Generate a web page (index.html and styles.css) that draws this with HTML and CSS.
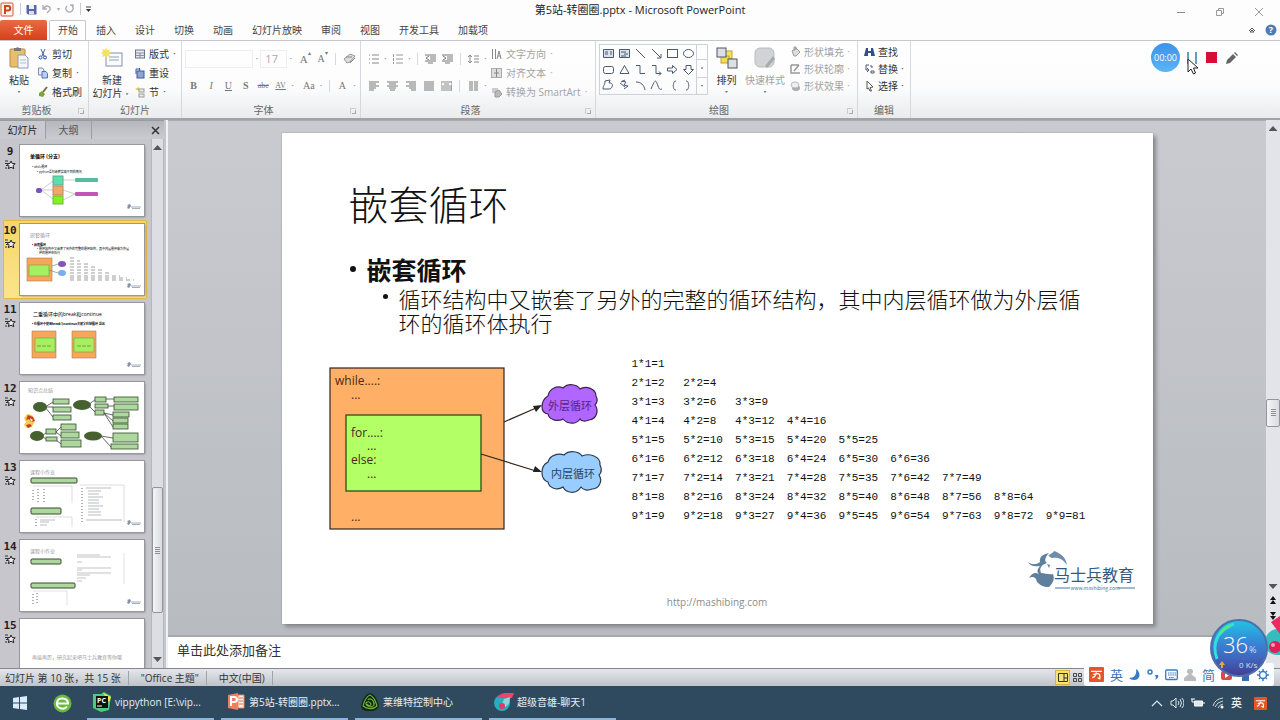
FILE: index.html
```html
<!DOCTYPE html>
<html lang="zh-CN">
<head>
<meta charset="utf-8">
<title>第5站-转圈圈.pptx - Microsoft PowerPoint</title>
<link rel="stylesheet" href="styles.css">
</head>
<body>
<svg class="defs" aria-hidden="true">
  <symbol id="star" viewBox="0 0 12 10"><path d="M1 1h3M1 3.500h2M2 5.500h2M1 8h2" stroke="#333" fill="none"/><path d="M7 1l1.200 2.500 3 .2-2.200 2 .8 3L7 7.200 4.300 8.700l.8-3-2.200-2 3-.2z" fill="#eee" stroke="#222"/></symbol>
  <symbol id="minilogo" viewBox="0 0 16 6"><path d="M1 1l3-1 1 2-2 3-2-1 1-2z" fill="#8593a5"/><path d="M5 3h10M6 4.500h8" stroke="#909aa5" stroke-width=".8"/></symbol>
  <symbol id="wan" viewBox="0 0 14 14"><rect width="14" height="14" rx="1" fill="#e4552a"/><path d="M2 4h10M3 10c3 0 3-3 4-5M4 7c4-1 7-2 6 4l-2-1" fill="none" stroke="#fff" stroke-width="1.200"/></symbol>
</svg>
<div class="app">
  <header class="titlebar">
    <div class="quick">
      <svg width="15" height="15" viewBox="0 0 15 15"><rect x="1" y="1" width="12" height="13" rx="1" fill="#fff3ec" stroke="#d35230"/><path d="M5 12V4h3a2.200 2.200 0 010 4.500H5" fill="none" stroke="#cf4320" stroke-width="2"/></svg>
      <i class="bar"></i>
      <button aria-label="保存"><svg width="11" height="11" viewBox="0 0 11 11"><path d="M.5 1h10v9.500H2L.5 9z" fill="#5866a8"/><rect x="3" y="1" width="5" height="4" fill="#eef"/><rect x="3" y="7" width="5" height="3.500" fill="#dde"/></svg></button>
      <button aria-label="撤消"><svg width="10" height="10" viewBox="0 0 10 10"><path d="M1 1v4h4M2 4c3-4 7-1 6 2L5 9" fill="none" stroke="#a9acb2" stroke-width="1.300"/></svg></button>
      <span class="dot">▾</span>
      <button aria-label="重复"><svg width="10" height="10" viewBox="0 0 10 10"><path d="M2 2a3.500 3.500 0 105 0M8 4V1H5" fill="none" stroke="#a9acb2" stroke-width="1.300"/></svg></button>
      <i class="bar"></i>
      <button aria-label="自定义"><svg width="6" height="7" viewBox="0 0 6 7"><path d="M0 1h5" stroke="#444"/><path d="M0 3h5L2.500 6z" fill="#333"/></svg></button>
    </div>
    <h1>第5站-转圈圈.pptx - Microsoft PowerPoint</h1>
    <div class="wincontrols">
      <button aria-label="最小化"><svg width="10" height="10" viewBox="0 0 10 10"><path d="M1 5.500h8" stroke="#888"/></svg></button>
      <button aria-label="还原"><svg width="10" height="10" viewBox="0 0 10 10"><path d="M1.500 3.500h5v5h-5zM3.500 3V1.500h5v5H7" fill="none" stroke="#999"/></svg></button>
      <button aria-label="关闭"><svg width="10" height="10" viewBox="0 0 10 10"><path d="M1 1l8 8M9 1L1 9" stroke="#999"/></svg></button>
    </div>
  </header>

  <nav class="tabs">
    <button class="file">文件</button><button class="active">开始</button><button>插入</button><button>设计</button><button>切换</button><button>动画</button><button>幻灯片放映</button><button>审阅</button><button>视图</button><button>开发工具</button><button>加载项</button>
    <span class="help"><svg width="8" height="8" viewBox="0 0 8 8"><path d="M1 5l3-3 3 3M2 6h4L4 4z" fill="none" stroke="#555"/></svg>
    <svg width="12" height="12" viewBox="0 0 12 12"><circle cx="6" cy="6" r="5.500" fill="#4f7ab5"/><text x="6" y="9" text-anchor="middle" fill="#fff" class="q">?</text></svg></span>
  </nav>

  <section class="ribbon">
    <div class="group g-clip">
      <div class="tools">
        <button class="big"><svg width="22" height="24" viewBox="0 0 22 24"><rect x="2" y="3" width="15" height="18" rx="1" fill="#e8bd6c" stroke="#b98a3c"/><path d="M6 5V2h2a2 2 0 013 0h2v3z" fill="#777"/><path d="M10 9h7l3 3v10H10z" fill="#f3f6fc" stroke="#8e9bb5"/><path d="M12 14h6M12 17h6" stroke="#b3bed0"/></svg><span>粘贴</span><i class="caret"></i></button>
        <div class="stack">
          <button><svg width="10" height="12" viewBox="0 0 10 12"><path d="M3 1l3 7M7 1L4 8" stroke="#46619b"/><circle cx="2.500" cy="9.500" r="1.500" fill="none" stroke="#234a91"/><circle cx="7" cy="9.500" r="1.500" fill="none" stroke="#234a91"/></svg>剪切</button>
          <button><svg width="10" height="12" viewBox="0 0 10 12"><path d="M.5 1h4l1.500 2v5H.500z" fill="#e8eefa" stroke="#778bb4"/><path d="M4 4.500h4l1.500 2V11H4z" fill="#b9cdf2" stroke="#5774b2"/></svg>复制<i class="caret"></i></button>
          <button><svg width="10" height="12" viewBox="0 0 10 12"><path d="M9 1L5 6" stroke="#786b3c" stroke-width="2"/><path d="M1 7l3-2 3 3-2 3-4-1z" fill="#7ba638"/></svg>格式刷</button>
        </div>
      </div>
      <h2>剪贴板</h2><i class="launch"></i>
    </div>
    <div class="group g-slide">
      <div class="tools">
        <button class="big"><svg width="22" height="24" viewBox="0 0 22 24"><rect x="5" y="7" width="16" height="13" fill="#f8fbff" stroke="#8590a8"/><path d="M8 11h10M8 14h10" stroke="#c6cede" stroke-width="2"/><path d="M5 1l1 3 3-1-1 3 3 1-3 1 1 3-3-1-1 3-1-3-3 1 1-3-3-1 3-1-1-3 3 1z" fill="#f4e35d"/></svg><span>新建<br>幻灯片<i class="caret"></i></span></button>
        <div class="stack">
          <button><svg width="10" height="12" viewBox="0 0 10 12"><rect x=".5" y="2" width="9" height="8" fill="#e6e9f0" stroke="#6d7486"/><path d="M1 5h8M5 5v5M1 7.500h8" stroke="#8a90a0"/></svg>版式<i class="caret"></i></button>
          <button><svg width="10" height="12" viewBox="0 0 10 12"><rect x="2" y="4" width="7" height="7" fill="#8fa4d0" stroke="#455b91"/><path d="M1 7V2h4l-1-1M5 2L4 4" fill="none" stroke="#31589b"/></svg>重设</button>
          <button><svg width="10" height="12" viewBox="0 0 10 12"><path d="M0 3l4-2v4z" fill="#eecb42"/><rect x="4" y="3" width="5" height="3" fill="#eee" stroke="#999"/><rect x="4" y="8" width="5" height="3" fill="#eee" stroke="#999"/></svg>节<i class="caret"></i></button>
        </div>
      </div>
      <h2>幻灯片</h2>
    </div>
    <div class="group g-font">
      <div class="rows">
        <div class="row">
          <select class="face" aria-label="字体"><option></option></select><i class="caret"></i>
          <input class="size" aria-label="字号" value="17"><i class="caret"></i>
          <button class="serif grow">A<sup>▴</sup></button><button class="serif shrink">A<sup>▾</sup></button><i class="sep"></i>
          <button aria-label="清除格式"><svg width="13" height="12" viewBox="0 0 13 12"><path d="M1 6L7 1l5 2-5 6-3 1z" fill="#ddd" stroke="#999"/><path d="M3 4h6M7 10l5-5" stroke="#888"/></svg></button>
        </div>
        <div class="row serif">
          <button><b>B</b></button><button><i>I</i></button><button><u>U</u></button><button><b>S</b></button><button class="tiny"><s>abe</s></button><button class="tiny"><u>AV</u></button><i class="caret"></i><button class="aa">Aa</button><i class="caret"></i><i class="sep"></i><button>A</button><i class="caret"></i>
        </div>
      </div>
      <h2>字体</h2><i class="launch"></i>
    </div>
    <div class="group g-para">
      <div class="tools">
        <div class="rows">
          <div class="row">
            <button aria-label="项目符号"><svg width="11" height="10" viewBox="0 0 11 10"><path d="M1 1h1M1 5h1M1 9h1M4 1h7M4 5h7M4 9h7" stroke="#888"/></svg></button><i class="caret"></i>
            <button aria-label="编号"><svg width="11" height="10" viewBox="0 0 11 10"><path d="M1.500 0v3M1.500 4v3M1.500 8v2M4 1h7M4 5h7M4 9h7" stroke="#999"/></svg></button><i class="caret"></i><i class="sep"></i>
            <button aria-label="减少缩进"><svg width="11" height="10" viewBox="0 0 11 10"><path d="M0 1h11M5 3h6M5 5h6M0 7h11M3 9h5M4 2L1 4l3 2" stroke="#777" fill="none"/></svg></button>
            <button aria-label="增加缩进"><svg width="11" height="10" viewBox="0 0 11 10"><path d="M0 1h11M5 3h6M5 5h6M0 7h11M3 9h5M1 2l3 2-3 2" stroke="#777" fill="none"/></svg></button><i class="sep"></i>
            <button aria-label="行距"><svg width="11" height="10" viewBox="0 0 11 10"><path d="M2 1v8M0 3l2-2 2 2M0 7l2 2 2-2M6 2h5M6 5h5M6 8h5" stroke="#888" fill="none"/></svg></button><i class="caret"></i>
          </div>
          <div class="row">
            <button aria-label="左对齐"><svg width="11" height="10" viewBox="0 0 11 10"><path d="M0 1h10M0 3h7M0 5h10M0 7h7M0 9h5" stroke="#777"/></svg></button>
            <button aria-label="居中"><svg width="11" height="10" viewBox="0 0 11 10"><path d="M0 1h11M2 3h7M0 5h11M2 7h7M3 9h5" stroke="#777"/></svg></button>
            <button aria-label="右对齐"><svg width="11" height="10" viewBox="0 0 11 10"><path d="M1 1h10M4 3h7M1 5h10M4 7h7M6 9h5" stroke="#777"/></svg></button>
            <button aria-label="两端对齐"><svg width="11" height="10" viewBox="0 0 11 10"><path d="M1 1h10M1 3h10M1 5h10M1 7h10M1 9h10" stroke="#777"/></svg></button>
            <button aria-label="分散对齐"><svg width="11" height="10" viewBox="0 0 11 10"><path d="M0 0v10M11 0v10M1 1h10M1 5h10M1 7h10M1 9h10M3 3h5" stroke="#888"/></svg></button><i class="sep"></i>
            <button aria-label="分栏"><svg width="11" height="10" viewBox="0 0 11 10"><path d="M1 1h4M1 3h4M1 5h4M1 7h4M1 9h4M6 1h4M6 3h4M6 5h4M6 7h4M6 9h4" stroke="#777"/></svg></button><i class="caret"></i>
          </div>
        </div>
        <div class="stack dim">
          <button><svg width="11" height="12" viewBox="0 0 11 12"><path d="M1.500 1v10M4.500 1v10M6 11l2-8 2 8M7 8h3" stroke="#888" fill="none"/></svg>文字方向<i class="caret"></i></button>
          <button><svg width="11" height="12" viewBox="0 0 11 12"><rect x=".5" y="1.500" width="10" height="9" fill="#ddd" stroke="#aaa"/><path d="M5.500 2v8M3 6h5" stroke="#888"/></svg>对齐文本<i class="caret"></i></button>
          <button><svg width="11" height="12" viewBox="0 0 11 12"><path d="M1 2h6v5H1z" fill="#ccc"/><path d="M4 6l4-2 3 4-3 3H4z" fill="#bbb" stroke="#999"/></svg>转换为 SmartArt<i class="caret"></i></button>
        </div>
      </div>
      <h2>段落</h2><i class="launch"></i>
    </div>
    <div class="group g-draw">
      <div class="tools">
        <div class="gallery">
          <svg viewBox="0 0 96 48" width="96" height="48" fill="none" stroke="#4b5872" role="img" aria-label="形状">
            <path d="M3.500 4.500h10v8h-10zM19.500 4.500h10v8h-10z" fill="#dde1ea"/><path d="M5 7h3M5 9h3M10 7h2M10 9h2M21 7h5M24 9h4M21 11h5"/>
            <path d="M36 4l9 9M52 4l9 9M61 9v4h-4"/><rect x="67.500" y="4.500" width="10" height="8"/><ellipse cx="88.500" cy="8.500" rx="5" ry="4"/>
            <rect x="3.500" y="21.500" width="10" height="7" rx="2"/><path d="M24.500 20.500l4.500 8h-9zM36 20.500h4v8h5M52 20.500h4v8h5l-2-2m2 2l-2 2M67.500 23h5v-2.500l4.500 4-4.500 4V26h-5zM86 20.500h5v4h2.500l-5 5-5-5H86z"/>
            <path d="M5 36l5-1-1 3c5-1 4 6 0 6H3c0-4 2-3 2-8zM22 36l4 1-2 3 4 1-4 3m-4-6l5 4m-4-5l4-2M36 37c5 0 8 3 9 8M51 44c5-12 5-8 7-3s2 3 4 3M76 36c-3 0-2 3-3 5 1 1 0 4 3 4M86 36c3 0 2 3 3 5-1 1 0 4-3 4"/>
          </svg>
          <div class="gscroll"><button aria-label="向上"></button><button aria-label="向下"><i class="caret"></i></button><button aria-label="更多"><i class="caret"></i></button></div>
        </div>
        <button class="big arrange"><svg width="22" height="24" viewBox="0 0 22 24"><rect x="8" y="5" width="8" height="8" fill="#f4e466" stroke="#b8a12e"/><rect x="5" y="10" width="8" height="7" fill="#f2dc50" stroke="#b8a12e"/><rect x="1" y="2" width="9" height="9" fill="#dcdfe6" stroke="#4f5561"/><rect x="12" y="13" width="9" height="9" fill="#dcdfe6" stroke="#4f5561"/></svg><span>排列</span><i class="caret"></i></button>
        <button class="big faded"><svg width="22" height="24" viewBox="0 0 22 24"><rect x="1" y="2" width="19" height="19" rx="5" fill="#d2d3d6" stroke="#bbb"/><path d="M19 10l-8 10 2 2 8-9z" fill="#aaa"/></svg><span>快速样式</span><i class="caret"></i></button>
        <div class="stack tight dim">
          <button><svg width="11" height="12" viewBox="0 0 11 12"><path d="M2 5l4-3 4 4-4 4H4zM4 5V1h2v3" fill="#ddd" stroke="#999"/></svg>形状填充<i class="caret"></i></button>
          <button><svg width="11" height="12" viewBox="0 0 11 12"><path d="M1 2h8M1 2v8h9M9 2L4 8" stroke="#999" fill="none" stroke-width="1.500"/></svg>形状轮廓<i class="caret"></i></button>
          <button><svg width="11" height="12" viewBox="0 0 11 12"><ellipse cx="6" cy="8" rx="4" ry="3" fill="#aaa"/><ellipse cx="5" cy="5" rx="4" ry="3" fill="#eee" stroke="#bbb"/></svg>形状效果<i class="caret"></i></button>
        </div>
      </div>
      <h2>绘图</h2><i class="launch"></i>
    </div>
    <div class="group g-edit">
      <div class="tools"><div class="stack tight">
        <button><svg width="11" height="12" viewBox="0 0 11 12"><path d="M2 2h2v3h3V2h2l2 8H7V7H4v3H0z" fill="#2f4f8d"/></svg>查找</button>
        <button><svg width="11" height="12" viewBox="0 0 11 12"><path d="M5 2H2v5h2M3 5l2 2-2 2M6 3h2v2M7 8h3v2H7z" fill="none" stroke="#4a5878"/></svg>替换<i class="caret"></i></button>
        <button><svg width="11" height="12" viewBox="0 0 11 12"><path d="M3 1l6 6-3 .5L7.500 11 6 11 4.500 8 3 9z" fill="#fff" stroke="#555"/></svg>选择<i class="caret"></i></button>
      </div></div>
      <h2>编辑</h2>
    </div>
  </section>

  <main class="work">
    <aside class="pane">
      <div class="panetabs"><button class="on">幻灯片</button><button>大纲</button><button class="close" aria-label="关闭窗格"><svg width="9" height="9" viewBox="0 0 9 9"><path d="M1 1l7 7M8 1L1 8" stroke="#333" stroke-width="1.500"/></svg></button></div>
      <div class="panebody">
        <ol class="thumbs">
          <li><div class="num">9<svg width="12" height="10"><use href="#star"/></svg></div>
            <svg class="thumb" viewBox="0 0 124 71"><text x="10" y="13" class="t5 bold">单循环 (分支)</text><text x="12" y="23" class="t3">• while循环</text><text x="17" y="28" class="t3">• python语句嵌套实现不同的情况</text><path d="M21 45l12-9M21 45h12M21 45l12 9M43 35h12M43 45l12 4M43 55l12-6" stroke="#aaa" stroke-width=".6"/><rect x="16" y="43" width="6" height="5" rx="2" fill="#7853be"/><rect x="33" y="31" width="10" height="9" fill="#5cdfae" stroke="#65a892"/><rect x="33" y="41" width="10" height="9" fill="#f2a66a" stroke="#c28759"/><rect x="33" y="51" width="10" height="8" fill="#80f31c" stroke="#70b545"/><rect x="55" y="33" width="23" height="4" rx="1" fill="#54bba0"/><rect x="55" y="47" width="23" height="4" rx="1" fill="#c355b8"/><use href="#minilogo" x="106" y="59" width="16" height="6"/></svg></li>
          <li class="sel"><div class="num">10<svg width="12" height="10"><use href="#star"/></svg></div>
            <svg class="thumb" viewBox="0 0 124 71"><text x="10" y="13" class="t5 gray">嵌套循环</text><text x="12" y="22" class="t3 bold">• 嵌套循环</text><text x="17" y="26" class="t3">• 循环结构中又嵌套了另外的完整的循环结构，其中内层循环做为外层</text><text x="19" y="30" class="t3">环的循环体执行</text><rect x="7" y="34" width="25" height="23" fill="#f7a65a" stroke="#a87d55" stroke-width=".6"/><rect x="9" y="41" width="20" height="11" fill="#a6ef60" stroke="#6da33f" stroke-width=".6"/><path d="M32 42l6-2M29 46l9 3" stroke="#777" stroke-width=".6"/><ellipse cx="42" cy="40" rx="4" ry="3" fill="#8156b5"/><ellipse cx="42" cy="49" rx="4" ry="3" fill="#78aeea"/><path d="M50 34h5M50 37h10M50 40h18M50 43h27M50 46h34M50 49h42M50 52h50M50 54h57M50 56h64" stroke="#777" stroke-width=".7" stroke-dasharray="4 3"/><use href="#minilogo" x="106" y="59" width="16" height="6"/></svg></li>
          <li><div class="num">11<svg width="12" height="10"><use href="#star"/></svg></div>
            <svg class="thumb" viewBox="0 0 124 71"><text x="13" y="13" class="t5">二重循环中的break和continue</text><text x="12" y="22" class="t3 bold">• 在循环中使用break与continue关键字控制循环 退出</text><g stroke="#a87d55" stroke-width=".6" fill="#f7a65a"><path d="M12 28h24v27H12zM52 28h24v27H52z"/></g><path d="M15 35h20v14H15zM54 35h20v14H54z" fill="#a6ef60" stroke="#6da33f" stroke-width=".6"/><path d="M17 43h15M57 43h15" stroke="#4b6b2b" stroke-dasharray="4 1" stroke-width=".6"/><use href="#minilogo" x="106" y="59" width="16" height="6"/></svg></li>
          <li><div class="num">12<svg width="12" height="10"><use href="#star"/></svg></div>
            <svg class="thumb" viewBox="0 0 124 71"><text x="8" y="10" class="t5 gray">知识点总结</text><path d="M25 25l8-5M25 25h8M25 25l8 10M68 23l8-6M68 23l8 8M85 17h10M85 24h10M84 31l9 2M84 31l9 8M84 31l9 14M22 54l5-4M22 54l5 4M36 50l5-5M36 50l5 4M36 58l5 4M81 54l12 2M81 54l10 11" stroke="#444" stroke-width=".8"/><g fill="#46612f"><ellipse cx="20" cy="25" rx="7" ry="5"/><ellipse cx="62" cy="23" rx="9" ry="5"/><ellipse cx="17" cy="54" rx="7" ry="5"/><ellipse cx="73" cy="54" rx="9" ry="4.500"/></g><g fill="#add79f" stroke="#344d2b" stroke-width=".8"><rect x="33" y="17" width="16" height="5"/><rect x="33" y="25" width="18" height="5"/><rect x="33" y="33" width="18" height="5"/><rect x="75" y="15" width="11" height="5"/><rect x="75" y="22" width="13" height="4"/><rect x="75" y="28" width="9" height="5"/><rect x="94" y="15" width="24" height="5"/><rect x="94" y="22" width="24" height="6"/><rect x="93" y="30" width="16" height="5"/><rect x="93" y="36" width="15" height="5"/><rect x="93" y="42" width="15" height="5"/><rect x="26" y="47" width="10" height="5"/><rect x="26" y="55" width="11" height="4"/><rect x="41" y="42" width="15" height="6"/><rect x="41" y="50" width="18" height="6"/><rect x="41" y="58" width="20" height="7"/><rect x="93" y="51" width="25" height="9"/><rect x="91" y="62" width="27" height="5"/></g><path d="M4 36l3-4 5 1 3 5-1 3-2 4-5 1-3-3 2-3z" fill="#f0d04c"/><path d="M8 33l5 2 2 4-4 1-2-3-3 1zM6 43l4-1 2 2-4 2z" fill="#c83b23"/><path d="M10 36l3 2-2 2z" fill="#fff"/></svg></li>
          <li><div class="num">13<svg width="12" height="10"><use href="#star"/></svg></div>
            <svg class="thumb" viewBox="0 0 124 71"><text x="10" y="13" class="t5 gray">课程小作业</text><g fill="#add79f" stroke="#344d2b"><rect x="11" y="17" width="46" height="5" rx="1"/><rect x="11" y="47" width="30" height="6" rx="1"/></g><path d="M13 25h39v17M60 24h44v37M16 56h36v10" fill="none" stroke="#bbb" stroke-width=".5"/><path d="M13 29v12M18 28v13M24 28v13M62 27v34M16 58v8" stroke="#999" stroke-width="1.500" stroke-dasharray="1 2"/><path d="M66 27h25M68 30h13M68 33h11M68 36h15M68 39h11M68 42h11M68 45h15M68 48h11M68 51h13M68 54h13M66 59h36M20 59h15M20 61h9M20 64h7" stroke="#9aa1a8" stroke-width=".7"/><use href="#minilogo" x="106" y="59" width="16" height="6"/></svg></li>
          <li><div class="num">14<svg width="12" height="10"><use href="#star"/></svg></div>
            <svg class="thumb" viewBox="0 0 124 71"><text x="10" y="13" class="t5 gray">课程小作业</text><g fill="#add79f" stroke="#344d2b"><rect x="11" y="19" width="30" height="5" rx="1"/><rect x="11" y="43" width="44" height="5" rx="1"/></g><path d="M13 51h34v14M104 13v31" fill="none" stroke="#ccc" stroke-width=".6"/><path d="M13 54v11M17 53v12" stroke="#999" stroke-width="1.500" stroke-dasharray="1 2"/><path d="M57 15h23M57 17h34M57 22h5M57 28h34M57 30h5M57 33h34M57 35h13M57 38h9M57 41h5" stroke="#aaa" stroke-width=".7"/><use href="#minilogo" x="106" y="59" width="16" height="6"/></svg></li>
          <li><div class="num">15<svg width="12" height="10"><use href="#star"/></svg></div>
            <svg class="thumb" viewBox="0 0 124 71"><text x="12" y="40" class="t5 gray">再接再厉，研究起来吧马士兵教育等你哦</text></svg></li>
        </ol>
        <div class="vscroll left"><i class="up"></i><i class="track1"></i><i class="knob"></i><i class="track2"></i><i class="down"></i></div>
      </div>
    </aside>

    <section class="editor">
      <div class="canvas">
        <article class="slide">
          <h2>嵌套循环</h2>
          <ul class="lvl1"><li><b>嵌套循环</b>
            <ul class="lvl2"><li>循环结构中又嵌套了另外的完整的循环结构，其中内层循环做为外层循<br>环的循环体执行</li></ul></li></ul>
          <div class="figures">
            <svg class="diagram" width="276" height="164" viewBox="0 0 276 164">
              <g stroke="#33261c" stroke-width="1.200"><rect x="1" y="1" width="174" height="161" fill="#ffb066"/><rect x="17" y="48" width="135" height="76" fill="#b2ff66" stroke="#24400e"/>
              <path d="M175 55l32-14M152 87l55 17"/></g>
              <path d="M213 38l-9 1 3 6zM213 105l-7-6-2 6z" fill="#222"/>
              <path d="M219 29c1-7 9-11 15-8 5-5 14-4 17 1 6-4 16 0 16 7 2 4 1 7-1 9 4 5 2 14-6 15-4 2-8 1-9-1-4 6-13 5-17 0-5 3-14 1-15-5-8-1-8-13 0-18z" fill="#b066ff" stroke="#3b224f" stroke-width="1.200"/>
              <path d="M219 95c2-7 10-9 16-7 5-5 15-4 18 1 7-3 19 0 18 9 2 4 1 8-1 10 4 6 0 14-7 14-4 2-9 1-11-2-5 8-15 6-18 0-6 4-14 1-15-5-8-3-8-16 0-20z" fill="#99ccff" stroke="#263c51" stroke-width="1.200"/>
              <g class="code"><text x="6" y="18">while....:</text><text x="22" y="32">...</text><text x="22" y="70">for....:</text><text x="38" y="83">...</text><text x="22" y="97">else:</text><text x="38" y="111">...</text><text x="22" y="154">...</text></g>
              <text x="241" y="43" class="cloud c1">外层循环</text><text x="244" y="111" class="cloud">内层循环</text>
            </svg>
            <table class="times">
              <tr><td>1*1=1</td><td></td><td></td><td></td><td></td><td></td><td></td><td></td><td></td></tr>
              <tr><td>2*1=2</td><td>2*2=4</td></tr>
              <tr><td>3*1=3</td><td>3*2=6</td><td>3*3=9</td></tr>
              <tr><td>4*1=4</td><td>4*2=8</td><td>4*3=12</td><td>4*4=16</td></tr>
              <tr><td>5*1=5</td><td>5*2=10</td><td>5*3=15</td><td>5*4=20</td><td>5*5=25</td></tr>
              <tr><td>6*1=6</td><td>6*2=12</td><td>6*3=18</td><td>6*4=24</td><td>6*5=30</td><td>6*6=36</td></tr>
              <tr><td>7*1=7</td><td>7*2=14</td><td>7*3=21</td><td>7*4=28</td><td>7*5=35</td><td>7*6=42</td><td>7*7=49</td></tr>
              <tr><td>8*1=8</td><td>8*2=16</td><td>8*3=24</td><td>8*4=32</td><td>8*5=40</td><td>8*6=48</td><td>8*7=56</td><td>8*8=64</td></tr>
              <tr><td>9*1=9</td><td>9*2=18</td><td>9*3=27</td><td>9*4=36</td><td>9*5=45</td><td>9*6=54</td><td>9*7=63</td><td>9*8=72</td><td>9*9=81</td></tr>
            </table>
          </div>
          <footer><span class="url">http://mashibing.com</span>
            <svg class="logo" width="112" height="46" viewBox="0 0 112 46"><path d="M2 13c4 3 8 3 12 0-1-5 3-8 9-9-4 4-5 8-2 10-6 2-8 5-6 10 4 0 8 2 12 1 2 5 0 9-4 13-6 0-9-2-12-5-1-5-4-6-8-4 3-5 6-6 10-4-3-3-1-5 1-8-6 1-10 0-12-4z" fill="#5f7f9f"/><path d="M22 7c3-3 5-3 6-5 6 2 12 6 13 14-4-6-9-8-14-7-3 0-3-2-5-2z" fill="#6f8cab"/><path d="M21 15l3 1-1 3z" fill="#5f7f9f"/><text x="28" y="32" class="brand">马士兵教育</text><path d="M29 39h15M92 39h17" stroke="#48759e"/><text x="69" y="41" text-anchor="middle" class="site">www.mashibing.com</text></svg>
          </footer>
        </article>
      </div>
      <div class="notes" contenteditable="true">单击此处添加备注</div>
    </section>
    <div class="vscroll right"><i class="up"></i><i class="track1"></i><i class="knob"></i><i class="track2"></i><i class="down"></i>
      <svg width="10" height="26" viewBox="0 0 10 26"><path d="M5 1l3 4H2zM5 5l3 4H2zM5 25l3-4H2zM5 21l3-4H2z" fill="#111"/></svg><i class="gap"></i></div>
  </main>

  <div class="status">
    <span>幻灯片 第 10 张，共 15 张</span><span>"Office 主题"</span><span>中文(中国)</span>
    <div class="views"><button class="on" aria-label="普通视图"><svg width="10" height="9" viewBox="0 0 10 9"><path d="M.5.5h9v8h-9zM6 0v8M6 5h4" fill="none" stroke="#333"/></svg></button><button aria-label="浏览视图"><svg width="10" height="9" viewBox="0 0 10 9"><path d="M.5.5h3v3h-3zM5.500.5h3v3h-3zM.5 5.500h3v3h-3zM5.500 5.500h3v3h-3z" fill="none" stroke="#444"/></svg></button></div>
  </div>

  <footer class="taskbar">
    <button class="ico" aria-label="开始"><svg width="14" height="14" viewBox="0 0 14 14"><path d="M0 2l6-1v5.500H0zM7 1l7-1v6.500H7zM0 7.500h6V13l-6-1zM7 7.500h7V14l-7-1z" fill="#dcecff"/></svg></button>
    <button class="ico browser" aria-label="浏览器"><svg width="19" height="19" viewBox="0 0 19 19"><circle cx="9.500" cy="9.500" r="9" fill="#69b93c"/><path d="M4 9.500h11c0-6-10-7-11-1s7 8 10 4" fill="none" stroke="#fff" stroke-width="2"/></svg></button>
    <button class="task"><svg width="20" height="20" viewBox="0 0 20 20"><path d="M1 2l8 0 3-2 7 4-2 14-8 2-8-4z" fill="#50cb7a"/><path d="M11 1l8 4-2 5z" fill="#f1e84b"/><rect x="4" y="4" width="12" height="12" fill="#111"/><text x="5" y="11" class="pc">PC</text><path d="M5 14h5" stroke="#fff"/></svg>vippython [E:\vip...</button>
    <button class="task"><svg width="20" height="20" viewBox="0 0 20 20"><path d="M2 3l10-2v17L2 16z" fill="#ed815d"/><path d="M12 3h6v13h-6z" fill="#fff0e8" stroke="#e9825e"/><path d="M13 6h4M13 9h4M13 12h4" stroke="#db6d4a"/><path d="M5 14V5h3c4 0 4 5 0 5H6" fill="none" stroke="#fff" stroke-width="2"/></svg>第5站-转圈圈.pptx...</button>
    <button class="task"><svg width="20" height="20" viewBox="0 0 20 20"><path d="M10 1c5 1 8 8 9 13-2 5-7 5-10 5-5 0-8-2-8-5C2 9 5 2 10 1z" fill="#132414"/><path d="M10 3c4 2 6 7 7 11-4 4-10 3-14 0C4 9 7 4 10 3zM8 8c2-3 7 1 6 5-2 3-7 2-8-1 0-3 4-3 5 0 0 2-3 2-4 0" fill="none" stroke="#67b63d" stroke-width="1.200"/></svg>莱维特控制中心</button>
    <button class="task"><svg width="20" height="20" viewBox="0 0 20 20"><circle cx="8" cy="11" r="8" fill="#25aebb"/><path d="M4 4c4-4 9-3 16-3l-2 5c-5 1-9 0-15 0z" fill="#ed4569"/><path d="M10 7l6-2c0 5-1 8-5 10l-3-3z" fill="#8ad5dc"/><circle cx="8" cy="14" r="3" fill="#e63862"/></svg>超级音雄-聊天1</button>
    <div class="tray">
      <svg width="12" height="12" viewBox="0 0 12 12"><path d="M1 9l5-5 5 5" fill="none" stroke="#dbe6ee" stroke-width="1.200"/></svg>
      <svg width="14" height="12" viewBox="0 0 14 12"><path d="M1 4h2l3-3v10L3 8H1zM8 4q2 2 0 4M10 2q3 4 0 8M12 1q4 5 0 10" fill="none" stroke="#dbe6ee"/></svg>
      <svg width="14" height="12" viewBox="0 0 14 12"><path d="M3.500 4h8v5h-8z" fill="#dbe6ee" stroke="#fff"/><path d="M12 6h2M0 2h4M1 2v3h3" stroke="#fff" fill="none"/></svg>
      <svg width="12" height="12" viewBox="0 0 12 12"><path d="M1 9Q3 2 11 1M3 10q2-5 8-6M6 11q1-3 5-4" fill="none" stroke="#cbd8e2"/><circle cx="10" cy="10" r="1.500" fill="#fff"/></svg>
      <b>英</b>
      <svg width="13" height="13"><use href="#wan"/></svg>
    </div>
  </footer>

  <div class="recorder"><span class="time">00:00</span>
    <button aria-label="暂停"><svg width="10" height="12" viewBox="0 0 10 12"><path d="M1 0v12M9 0v12" stroke="#2487a4" stroke-width="1.500"/></svg></button>
    <button aria-label="停止"><svg width="11" height="11"><rect width="11" height="11" fill="#d80f32"/></svg></button>
    <button aria-label="画笔"><svg width="12" height="12" viewBox="0 0 12 12"><path d="M0 12l1-4 6-6 3 3-6 6zM8 1l1-1 3 3-1 1z" fill="#666"/></svg></button></div>
  <svg class="cursor" width="12" height="18" viewBox="0 0 12 18"><path d="M1 1v13l3-3 2.500 5 2-1-2-5H11z" fill="#fff" stroke="#222"/></svg>

  <div class="ime">
    <svg width="15" height="15"><use href="#wan"/></svg><span>英</span>
    <svg width="12" height="12" viewBox="0 0 12 12"><path d="M7 0c5 3 5 11-2 11-2 0-4-1-5-2 5 0 8-3 7-9z" fill="#3a7cc4"/></svg>
    <svg width="12" height="12" viewBox="0 0 12 12"><circle cx="3" cy="3" r="2" fill="none" stroke="#3a7cc4" stroke-width="1.500"/><path d="M8 6h3c1 2-1 4-3 5l1-2z" fill="#3a7cc4"/></svg>
    <svg width="13" height="12" viewBox="0 0 13 12"><rect x=".7" y="1" width="11.600" height="9.500" rx="1" fill="none" stroke="#3a7cc4" stroke-width="1.300"/><path d="M3 4h8M3 6h8M4 8.500h5" stroke="#3a7cc4" stroke-dasharray="1.500 .7"/></svg>
    <svg width="12" height="12" viewBox="0 0 12 12"><path d="M6 0a2.500 2.500 0 011 5l5 4v3H0V9l5-4a2.500 2.500 0 011-5z" fill="#bbb"/></svg>
    <span>简</span>
    <svg width="12" height="12" viewBox="0 0 12 12"><rect y="2" width="11" height="9" rx="2" fill="#e14744"/><path d="M4 4l4 2.500L4 9z" fill="#fff"/></svg>
    <svg width="12" height="12" viewBox="0 0 12 12"><path d="M3 1l3 1 3-1 3 3-2 2v6H3V6L0 4z" fill="#3a6cb4"/></svg>
    <svg width="12" height="12" viewBox="0 0 12 12"><circle cx="6" cy="6" r="3.500" fill="none" stroke="#3a7cc4" stroke-width="1.500"/><path d="M6 0v2M6 10v2M0 6h2M10 6h2M2 2l1 1M9 9l1 1M2 10l1-1M9 3l1-1" stroke="#3a7cc4" stroke-width="1.500"/></svg>
  </div>
  <svg class="petal" width="16" height="44" viewBox="0 0 16 44"><path d="M16 12C3 14 0 22 1 30c3 8 8 9 15 9z" fill="#37bbc0"/><path d="M16 0L7 6l9 12z" fill="#ee2861"/><circle cx="11" cy="31" r="6" fill="#e51d56"/><circle cx="9" cy="29" r="2" fill="#fb9ab2"/></svg>
  <div class="ball"><svg width="58" height="58" viewBox="0 0 58 58"><defs><linearGradient id="bg" x2="0" y2="1"><stop stop-color="#20c5e4"/><stop offset=".35" stop-color="#358dd8"/><stop offset=".7" stop-color="#4164bd"/><stop offset="1" stop-color="#433c92"/></linearGradient></defs><circle cx="29" cy="29" r="28" fill="url(#bg)" stroke="#4d70a9" stroke-width="2"/><path d="M7 40C1 24 9 9 24 5" fill="none" stroke="#32dfdc" stroke-width="3"/><path d="M10 15q4-6 10-8" fill="none" stroke="#55e58b" stroke-width="3"/><text x="13" y="34" class="pct">36</text><text x="39" y="34" class="sign">%</text><text x="29" y="49" class="rate">0 K/s</text><path d="M11 49h2v-3h2l-3-4-3 4h2z" fill="#e6a83d"/></svg></div>
</div>
</body>
</html>
```
FILE: styles.css
```css
* { box-sizing: border-box; }
body { margin: 0; font: 10px/14px "Open Sans", "Noto Sans CJK SC", sans-serif; color: #333; }
button { font: inherit; color: inherit; background: none; border: 0; padding: 0; margin: 0; display: inline-flex; align-items: center; justify-content: center; }
svg { display: block; flex: none; }
.defs { position: absolute; width: 0; height: 0; }
.app { position: relative; display: flex; flex-direction: column; height: 100vh; overflow: hidden; }

.titlebar { display: grid; grid-template-columns: 1fr auto 1fr; align-items: center; height: 20px; background: #fdfdfd; }
.titlebar h1 { margin: 0; font-size: 11px; font-weight: 400; color: #222; }
.quick { display: flex; align-items: center; gap: 5px; padding-bottom: 2px; }
.quick .bar { width: 1px; height: 12px; background: #ccc; }
.quick .dot { font-size: 6px; color: #aaa; }
.wincontrols { display: flex; justify-content: flex-end; gap: 29px; padding: 4px 16px 0 0; }

.tabs { display: flex; height: 21px; border-bottom: 1px solid #c5c8cd; background: #fdfdfd; }
.tabs button { padding: 0 9px 1px 10px; height: 20px; color: #444; }
.tabs .file { width: 47px; background: linear-gradient(#e76c43, #d6401c); color: #fff; border-radius: 2px 2px 0 0; margin-right: 2px; padding: 0; }
.tabs .active { background: #fff; border: 1px solid #c5c8cd; border-bottom: 0; padding: 0 7px 1px 8px; border-radius: 2px 2px 0 0; }
.help { margin-left: auto; display: flex; align-items: center; gap: 9px; padding-right: 3px; }
.q { font-size: 9px; font-weight: 700; }

.ribbon { display: flex; height: 79px; background: linear-gradient(#fff 0%, #fcfcfd 60%, #e9ebee 100%); border-bottom: 2px solid #a0a2a6; }
.group { position: relative; display: flex; flex-direction: column; border-right: 1px solid #d5d8dd; }
.group h2 { margin: auto 0 0; font-size: 10px; line-height: 15px; font-weight: 400; text-align: center; color: #666; }
.g-clip h2, .g-font h2, .g-para h2, .g-draw h2 { padding-right: 15px; }
.launch { position: absolute; right: 4px; bottom: 4px; width: 6px; height: 6px; border-left: 1px solid #ccc; border-top: 1px solid #ccc; }
.launch::after { content: ""; position: absolute; right: 0; bottom: 0; width: 3px; height: 3px; border-right: 1px solid #aaa; border-bottom: 1px solid #aaa; }
.g-clip { width: 89px; } .g-slide { width: 93px; } .g-font { width: 179px; } .g-para { width: 235px; } .g-draw { width: 262px; } .g-edit { width: 53px; }
.caret { display: inline-block; flex: none; width: 3px; height: 2px; margin: 0 3px; background: #777; clip-path: polygon(0 0, 100% 0, 50% 100%); vertical-align: middle; }
.tools { display: flex; align-items: flex-start; }
.big { flex-direction: column; justify-content: flex-start; line-height: 13px; padding-top: 5px; gap: 4px; }
.g-clip .big { width: 38px; }
.g-slide .big { width: 46px; }
.g-slide .big span { white-space: nowrap; }
.stack { display: flex; flex-direction: column; padding-top: 3px; }
.stack button { height: 19px; justify-content: flex-start; gap: 4px; white-space: nowrap; }
.stack .caret { margin: 0; }
.stack.tight { padding-top: 2px; }
.stack.tight button { height: 17px; }
.dim { color: #a2a2a2; }
.dim .caret { background: #bbb; }
.faded { color: #a2a2a2; }
.rows { display: flex; flex-direction: column; padding: 4px 2px 0 3px; }
.row { display: flex; align-items: center; height: 27px; color: #777; }
.row button { width: 18px; height: 18px; }
.row .caret { margin: 0 2px; background: #aaa; }
.sep { width: 1px; height: 12px; margin: 0 4px; background: #d5d8dd; }
.face { width: 70px; height: 18px; appearance: none; border: 1px solid #eceef1; background: transparent; }
.size { width: 27px; height: 18px; border: 1px solid #eceef1; background: transparent; font: inherit; font-size: 11px; color: #aaa; padding: 0 4px; }
.serif { font-family: "Liberation Serif", serif; }
.row .grow { font-size: 11px; margin-left: 2px; } .shrink { font-size: 10px; }
.row sup { font-size: 6px; line-height: 6px; align-self: flex-start; }
.tiny { font-size: 8px; }
.aa { margin-left: 4px; }
.g-para .rows { width: 130px; padding-left: 4px; }
.gallery { display: flex; margin: 3px 0 0 3px; border: 1px solid #cdd1d8; height: 51px; }
.gscroll { display: grid; width: 11px; border-left: 1px solid #cdd1d8; }
.gscroll button + button { border-top: 1px solid #cdd1d8; }
.arrange { width: 37px; }
.g-draw .faded { width: 40px; }
.g-draw .stack { margin-left: 5px; }
.g-draw .stack button, .g-edit .stack button { gap: 3px; }
.g-edit .stack { margin-left: 6px; }

.work { display: flex; flex: 1; min-height: 0; background: #c2c3c8; }
.pane { display: flex; flex-direction: column; width: 168px; border-right: 2px solid #f0f1f3; padding-right: 2px; background: #c6c6cc; }
.panetabs { display: flex; height: 19px; background: linear-gradient(#b5b7bc, #c9cbd0); border-top: 1px solid #999ba0; }
.panetabs button { width: 46px; border-right: 1px solid #9b9da2; color: #555; }
.panetabs .on { background: #c9cad0; color: #222; }
.panetabs .close { width: 17px; margin-left: auto; border: 0; }
.panebody { display: flex; flex: 1; min-height: 0; }
.thumbs { flex: 1; list-style: none; margin: 0; padding: 2px 4px 0 3px; overflow: hidden; }
.thumbs li { display: flex; height: 79px; padding: 4px 0 4px 0; }
.thumbs .sel { background: linear-gradient(#f5d668, #fbe48c); border-radius: 2px; box-shadow: inset 0 0 0 1px #e3b93d; }
.num { width: 17px; display: flex; flex-direction: column; align-items: center; gap: 1px; font: bold 11px/14px "DejaVu Sans Mono", monospace; color: #222; padding-right: 3px; }
.thumb { width: 124px; height: 71px; background: #fff; box-shadow: 0 0 0 1px #9698a0, 1px 1px 2px #777; }
.t5 { font-size: 5px; } .t3 { font-size: 3px; } .bold { font-weight: 700; } .gray { fill: #999; }

.vscroll { display: flex; flex-direction: column; align-items: center; background: #dcdee3; }
.vscroll.left { width: 13px; border: 1px solid #b4b6bc; border-width: 0 1px; }
.up, .down { width: 9px; height: 5px; margin: 6px 0; background: #555; clip-path: polygon(50% 0, 100% 100%, 0 100%); }
.down { clip-path: polygon(0 0, 100% 0, 50% 100%); }
.track1, .track2 { flex: 1; }
.knob { width: 100%; height: 28px; border: 1px solid #92959c; border-radius: 2px; background: repeating-linear-gradient(#8d9097 0 1px, #e8e9ed 1px 2px) center / 5px 7px no-repeat, linear-gradient(90deg, #f3f4f6, #d9dbe0); }
.left .knob { height: 126px; }
.left .track1 { flex: 333; } .left .track2 { flex: 38; }
.vscroll.right { width: 14px; background: #e2e4e9; }
.right .track1 { flex: 261; } .right .track2 { flex: 151; }
.right .gap { height: 47px; }

.editor { display: flex; flex-direction: column; flex: 1; min-width: 0; }
.canvas { flex: 1; display: flex; justify-content: center; align-items: flex-start; padding: 12px 0 11px; background: linear-gradient(#c9cbd0, #b8bbbf); border-top: 1px solid #a9abb0; }
.slide { display: flex; flex-direction: column; width: 871px; height: 491px; background: #fff; padding: 41px 15px 14px 47px; box-shadow: 0 0 1px #777, 3px 3px 4px #85878b; color: #111; font-family: "Noto Sans CJK SC", sans-serif; }
.slide h2 { margin: 0 0 22px 20px; font-size: 40px; line-height: 58px; font-weight: 300; }
.slide ul { margin: 0; padding: 0; list-style: none; }
.slide li::before { content: ""; width: 6px; height: 6px; border-radius: 50%; background: #111; position: absolute; left: 0; top: 12px; }
.slide li { position: relative; padding-left: 17px; }
.slide .lvl2 li { padding-left: 16px; }
.slide .lvl2 li::before { top: 8px; width: 5px; height: 5px; }
.slide .lvl1 { margin-left: 21px; }
.lvl1 b { font-size: 25px; line-height: 31px; display: block; }
.slide .lvl2 { margin-left: 16px; font-size: 22px; line-height: 24px; font-weight: 300; white-space: nowrap; padding-top: 1px; }
.figures { display: flex; align-items: flex-start; margin-top: 21px; }
.diagram { margin-top: 12px; }
.code { font: 12px "Open Sans", sans-serif; fill: #432b17; }
.cloud { font-size: 11px; text-anchor: middle; fill: #264566; }
.c1 { fill: #5c2383; }
.times { width: 466px; margin-left: 27px; table-layout: fixed; border-collapse: collapse; font: 11px/19px "Liberation Mono", monospace; }
.times td { padding: 0; white-space: nowrap; }
.slide footer { display: grid; grid-template-columns: 1fr auto 1fr; margin: auto 0 0 -32px; }
.url { grid-column: 2; align-self: end; color: #8b8b8b; font: 10px/16px "Open Sans", sans-serif; }
.logo { justify-self: end; margin-bottom: 15px; }
.brand { font-size: 16px; fill: #355a7e; }
.site { font-size: 5px; fill: #48759e; }
.notes { height: 33px; background: #fff; border-top: 2px solid #a4a7ab; padding: 4px 9px; font-size: 13px; line-height: 18px; color: #333; }

.status { display: flex; align-items: center; height: 18px; border-top: 1px solid #85878c; background: linear-gradient(#e4e6ea, #bfc3ca); color: #333; padding-left: 5px; }
.status > span { padding-right: 7px; margin-right: 12px; border-right: 1px solid #a0a3a9; }
.views { display: flex; margin-left: auto; padding-right: 195px; }
.views button { width: 15px; height: 15px; }
.views .on { background: #f9e07b; border: 1px solid #d7b53f; }

.taskbar { display: flex; align-items: center; height: 34px; background: #2f4a5e; color: #e8eff5; }
.ico { width: 40px; height: 34px; }
.browser { width: 45px; margin-right: 2px; }
.task { width: 127px; height: 34px; margin-right: 7px; justify-content: flex-start; padding-left: 5px; gap: 3px; border-bottom: 2px solid #8bb5da; white-space: nowrap; }
.pc { font-size: 7px; font-weight: 700; fill: #fff; }
.tray { margin-left: auto; display: flex; align-items: center; gap: 7px; padding-right: 13px; }
.tray b { font-size: 11px; font-weight: 500; }
.tray svg:last-child { margin-left: 5px; }

.recorder { position: absolute; right: 42px; top: 43px; display: flex; align-items: center; gap: 9px; }
.time { width: 29px; height: 29px; border-radius: 50%; background: linear-gradient(#3e92e8, #59b5f8); color: #fff; text-align: center; line-height: 29px; font-size: 9px; margin-right: -2px; }
.cursor { position: absolute; right: 81px; top: 58px; }
.ime { position: absolute; right: 6px; top: 663px; width: 190px; height: 23px; display: flex; align-items: center; justify-content: space-between; padding: 0 5px; background: #fcfdff; border-radius: 3px; color: #3675b8; font-size: 13px; }
.ball { position: absolute; right: 12px; top: 619px; }
.petal { position: absolute; right: 0; top: 616px; }
.pct { font: 300 22px "Open Sans", sans-serif; fill: #fff; }
.sign { font-size: 9px; fill: #c5def5; }
.rate { font-size: 8px; fill: #d8e0f3; }
```
